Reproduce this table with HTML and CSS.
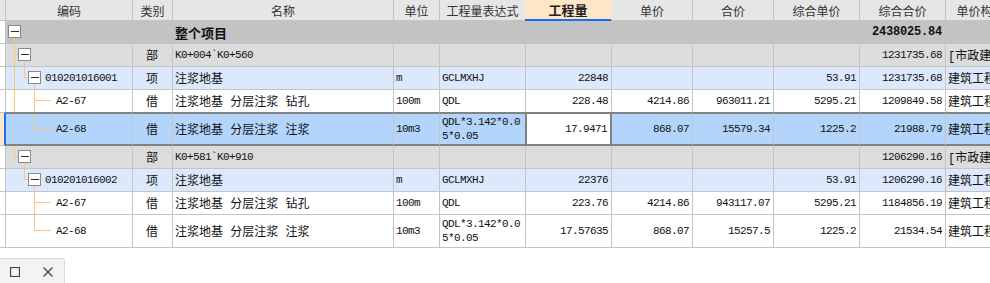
FILE: index.html
```html
<!DOCTYPE html>
<html lang="zh">
<head>
<meta charset="utf-8">
<title>工程量</title>
<link rel="stylesheet" href="styles.css">
</head>
<body>
<div class="sheet">
  <div class="row head">
    <div class="c strip"></div>
    <div class="c">编码</div>
    <div class="c">类别</div>
    <div class="c">名称</div>
    <div class="c">单位</div>
    <div class="c">工程量表达式</div>
    <div class="c hl">工程量</div>
    <div class="c">单价</div>
    <div class="c">合价</div>
    <div class="c">综合单价</div>
    <div class="c">综合合价</div>
    <div class="c">单价构成</div>
  </div>

  <div class="row total">
    <div class="c strip"></div>
    <div class="c code">
      <svg class="tree" width="20" height="22"><line class="ln" x1="8.5" y1="17" x2="8.5" y2="22"/><rect class="bx" x="2.5" y="4.5" width="12" height="12"/><line class="mn" x1="5" y1="10.5" x2="13" y2="10.5"/></svg>
    </div>
    <div class="c"></div>
    <div class="c tb">整个项目</div>
    <div class="c"></div><div class="c"></div><div class="c"></div><div class="c"></div><div class="c"></div><div class="c"></div>
    <div class="c r b">2438025.84</div>
    <div class="c"></div>
  </div>

  <div class="row part">
    <div class="c strip"></div>
    <div class="c code">
      <svg class="tree" width="30" height="22"><line class="ln" x1="8.5" y1="0" x2="8.5" y2="22"/><line class="ln" x1="9" y1="10.5" x2="12" y2="10.5"/><line class="ln" x1="18.5" y1="17" x2="18.5" y2="22"/><rect class="bx" x="12.5" y="4.5" width="12" height="12"/><line class="mn" x1="15" y1="10.5" x2="23" y2="10.5"/></svg>
    </div>
    <div class="c ctr">部</div>
    <div class="c m">K0+004`K0+560</div>
    <div class="c"></div><div class="c"></div><div class="c"></div><div class="c"></div><div class="c"></div><div class="c"></div>
    <div class="c r m">1231735.68</div>
    <div class="c">[市政建筑工程]</div>
  </div>

  <div class="row item">
    <div class="c strip"></div>
    <div class="c code">
      <svg class="tree" width="39" height="22"><line class="ln" x1="8.5" y1="0" x2="8.5" y2="22"/><line class="ln" x1="18.5" y1="0" x2="18.5" y2="11"/><line class="ln" x1="19" y1="10.5" x2="22" y2="10.5"/><line class="ln" x1="28.5" y1="17" x2="28.5" y2="22"/><rect class="bx" x="22.5" y="4.5" width="12" height="12"/><line class="mn" x1="25" y1="10.5" x2="33" y2="10.5"/></svg>
      <span class="m">010201016001</span>
    </div>
    <div class="c ctr">项</div>
    <div class="c">注浆地基</div>
    <div class="c m">m</div>
    <div class="c m">GCLMXHJ</div>
    <div class="c r m">22848</div>
    <div class="c"></div><div class="c"></div>
    <div class="c r m">53.91</div>
    <div class="c r m">1231735.68</div>
    <div class="c">建筑工程</div>
  </div>

  <div class="row">
    <div class="c strip"></div>
    <div class="c code">
      <svg class="tree" width="50" height="22"><line class="ln" x1="8.5" y1="0" x2="8.5" y2="22"/><line class="ln" x1="28.5" y1="0" x2="28.5" y2="22"/><line class="ln" x1="29" y1="10.5" x2="45" y2="10.5"/></svg>
      <span class="m">A2-67</span>
    </div>
    <div class="c ctr">借</div>
    <div class="c">注浆地基 分层注浆 钻孔</div>
    <div class="c m">100m</div>
    <div class="c m">QDL</div>
    <div class="c r m">228.48</div>
    <div class="c r m">4214.86</div>
    <div class="c r m">963011.21</div>
    <div class="c r m">5295.21</div>
    <div class="c r m">1209849.58</div>
    <div class="c">建筑工程</div>
  </div>

  <div class="row sel">
    <div class="c strip"></div>
    <div class="c code">
      <svg class="tree" width="50" height="30"><line class="ln" x1="28.5" y1="0" x2="28.5" y2="15"/><line class="ln" x1="29" y1="14.5" x2="45" y2="14.5"/></svg>
      <span class="m">A2-68</span>
    </div>
    <div class="c ctr">借</div>
    <div class="c">注浆地基 分层注浆 注浆</div>
    <div class="c m">10m3</div>
    <div class="c m wrap">QDL*3.142*0.05*0.05</div>
    <div class="c r m edit">17.9471</div>
    <div class="c r m">868.07</div>
    <div class="c r m">15579.34</div>
    <div class="c r m">1225.2</div>
    <div class="c r m">21988.79</div>
    <div class="c">建筑工程</div>
  </div>

  <div class="row part">
    <div class="c strip"></div>
    <div class="c code">
      <svg class="tree" width="30" height="22"><line class="ln" x1="8.5" y1="0" x2="8.5" y2="11"/><line class="ln" x1="9" y1="10.5" x2="12" y2="10.5"/><line class="ln" x1="18.5" y1="17" x2="18.5" y2="22"/><rect class="bx" x="12.5" y="4.5" width="12" height="12"/><line class="mn" x1="15" y1="10.5" x2="23" y2="10.5"/></svg>
    </div>
    <div class="c ctr">部</div>
    <div class="c m">K0+581`K0+910</div>
    <div class="c"></div><div class="c"></div><div class="c"></div><div class="c"></div><div class="c"></div><div class="c"></div>
    <div class="c r m">1206290.16</div>
    <div class="c">[市政建筑工程]</div>
  </div>

  <div class="row item">
    <div class="c strip"></div>
    <div class="c code">
      <svg class="tree" width="39" height="22"><line class="ln" x1="18.5" y1="0" x2="18.5" y2="11"/><line class="ln" x1="19" y1="10.5" x2="22" y2="10.5"/><line class="ln" x1="28.5" y1="17" x2="28.5" y2="22"/><rect class="bx" x="22.5" y="4.5" width="12" height="12"/><line class="mn" x1="25" y1="10.5" x2="33" y2="10.5"/></svg>
      <span class="m">010201016002</span>
    </div>
    <div class="c ctr">项</div>
    <div class="c">注浆地基</div>
    <div class="c m">m</div>
    <div class="c m">GCLMXHJ</div>
    <div class="c r m">22376</div>
    <div class="c"></div><div class="c"></div>
    <div class="c r m">53.91</div>
    <div class="c r m">1206290.16</div>
    <div class="c">建筑工程</div>
  </div>

  <div class="row">
    <div class="c strip"></div>
    <div class="c code">
      <svg class="tree" width="50" height="22"><line class="ln" x1="28.5" y1="0" x2="28.5" y2="22"/><line class="ln" x1="29" y1="10.5" x2="45" y2="10.5"/></svg>
      <span class="m">A2-67</span>
    </div>
    <div class="c ctr">借</div>
    <div class="c">注浆地基 分层注浆 钻孔</div>
    <div class="c m">100m</div>
    <div class="c m">QDL</div>
    <div class="c r m">223.76</div>
    <div class="c r m">4214.86</div>
    <div class="c r m">943117.07</div>
    <div class="c r m">5295.21</div>
    <div class="c r m">1184856.19</div>
    <div class="c">建筑工程</div>
  </div>

  <div class="row tall">
    <div class="c strip"></div>
    <div class="c code">
      <svg class="tree" width="50" height="32"><line class="ln" x1="28.5" y1="0" x2="28.5" y2="16"/><line class="ln" x1="29" y1="15.5" x2="45" y2="15.5"/></svg>
      <span class="m">A2-68</span>
    </div>
    <div class="c ctr">借</div>
    <div class="c">注浆地基 分层注浆 注浆</div>
    <div class="c m">10m3</div>
    <div class="c m wrap">QDL*3.142*0.05*0.05</div>
    <div class="c r m">17.57635</div>
    <div class="c r m">868.07</div>
    <div class="c r m">15257.5</div>
    <div class="c r m">1225.2</div>
    <div class="c r m">21534.54</div>
    <div class="c">建筑工程</div>
  </div>
</div>

<div class="dock">
  <svg class="ico" width="10" height="10"><rect x="0.5" y="0.5" width="9" height="9"/></svg>
  <svg class="ico" width="10" height="10"><line x1="0.5" y1="0.5" x2="9.5" y2="9.5"/><line x1="9.5" y1="0.5" x2="0.5" y2="9.5"/></svg>
</div>
</body>
</html>
```

FILE: styles.css
```css
body {
  margin: 0;
  background: #fff;
  overflow: hidden;
  font-family: "Liberation Mono", "Noto Sans CJK SC", monospace;
  font-size: 12px;
  color: #111;
}

.sheet {
  width: 1016px;
}

.row {
  display: grid;
  grid-template-columns: 6px 127px 40px 221px 46px 86px 86px 81px 81px 86px 86px 70px;
  height: 23px;
}

.c {
  box-sizing: border-box;
  min-width: 0;
  display: flex;
  align-items: center;
  padding: 0 3px 0 2px;
  border-right: 1px solid #c4c4c4;
  border-bottom: 1px solid #c4c4c4;
  overflow: hidden;
  white-space: nowrap;
}

.head {
  height: 21px;
  background: #e6e6e6;
  color: #333;
}

.head .c {
  justify-content: center;
  padding: 0;
  font-family: "Noto Sans CJK SC", sans-serif;
}

.head .hl {
  margin-left: -1px;
  background: #fde7c7;
  border-right-color: #fde7c7;
  border-bottom: 2px solid #1a6ef5;
  font-size: 13px;
  font-weight: bold;
  color: #222;
}

.strip {
  padding: 0;
  background: #fff;
}

.head .strip {
  background: #e6e6e6;
}

.total { background: #c3c3c3; }
.part { background: #dcdcdc; }
.item { background: #dce9fc; }

.sel {
  height: 34px;
  margin-top: -1px;
  background: #b3d5fc;
}

.sel .c {
  border-top: 2px solid #828282;
  border-bottom: 2px solid #828282;
}

.sel .strip {
  background: #fde7c7;
  border-top: 1px solid #c4c4c4;
  border-bottom: 1px solid #c4c4c4;
  border-right: 2px solid #1a6ef5;
}

.sel .edit {
  margin-left: -1px;
  background: #fff;
  border: 2px solid #828282;
}

.tall {
  height: 33px;
}

.code {
  padding: 0;
}

.tree {
  display: block;
  flex: none;
}

.ln {
  stroke: #fcc67c;
  stroke-width: 1;
}

.bx {
  fill: #fff;
  stroke: #8a8a8a;
  stroke-width: 1;
}

.mn {
  stroke: #2a2a2a;
  stroke-width: 1;
}

.r { justify-content: flex-end; }
.ctr { justify-content: center; }

.m {
  font-family: "Liberation Mono", monospace;
  font-size: 11px;
  letter-spacing: -0.6px;
}

.b {
  font-family: "Liberation Mono", monospace;
  font-weight: bold;
  font-size: 12px;
  letter-spacing: -0.2px;
}

.tb {
  font-family: "Noto Sans CJK SC", sans-serif;
  font-weight: bold;
  font-size: 13px;
}

.wrap {
  white-space: normal;
  word-break: break-all;
  line-height: 14px;
}

.dock {
  box-sizing: border-box;
  width: 65px;
  height: 30px;
  margin-top: 10px;
  padding: 8px 0 0 10px;
  display: flex;
  align-items: flex-start;
  gap: 23px;
  background: #f3f3f3;
  border-top: 1px solid #d8d8d8;
  border-right: 1px solid #d8d8d8;
  border-top-right-radius: 3px;
}

.ico {
  display: block;
  fill: none;
  stroke: #444;
  stroke-width: 1.2;
}
```
